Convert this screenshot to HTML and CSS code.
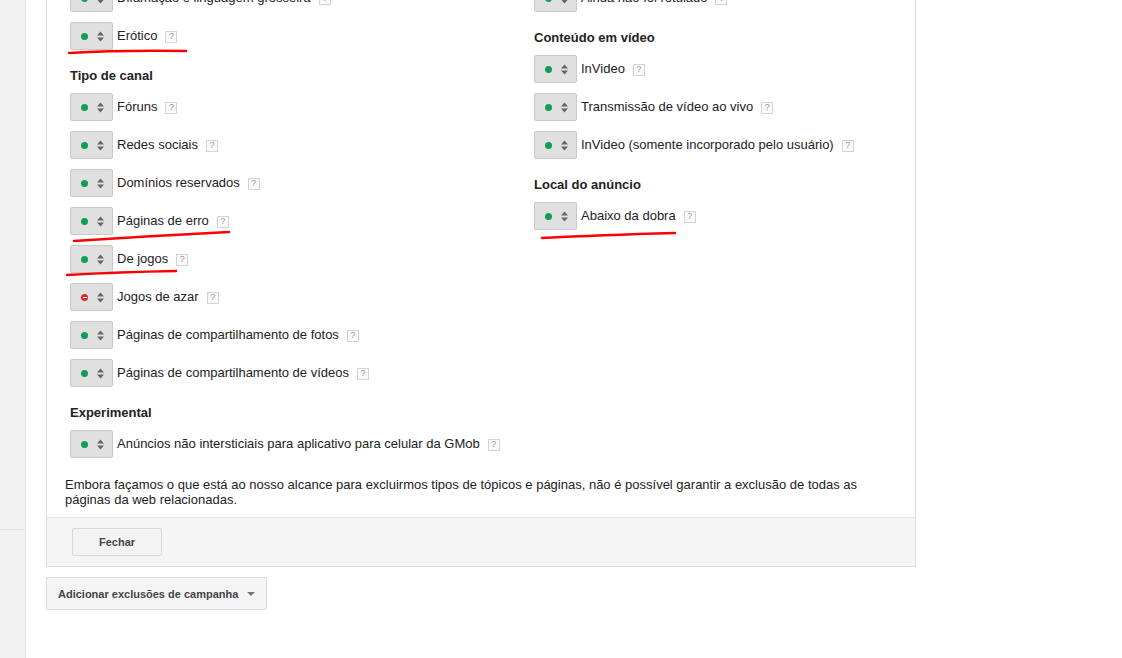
FILE: index.html
```html
<!DOCTYPE html>
<html lang="pt">
<head>
<meta charset="utf-8">
<title>Exclusões</title>
<link rel="stylesheet" href="styles.css">
</head>
<body>
<div class="page">
  <aside class="sidebar">
    <div class="side-top"></div>
    <div class="side-bottom"></div>
  </aside>
  <main class="main">
    <section class="panel">
      <div class="panel-body">
        <div class="columns">
          <div class="col">
            <div class="row"><span class="toggle"><i class="dot"></i><svg class="arr" viewBox="0 0 7 11"><path d="M0 4.5L3.5 0.5L7 4.5Z M0 6.5L3.5 10.5L7 6.5Z"/></svg></span><span class="label">Difamação e linguagem grosseira</span><span class="help">?</span></div>
            <div class="row"><span class="toggle"><i class="dot"></i><svg class="arr" viewBox="0 0 7 11"><path d="M0 4.5L3.5 0.5L7 4.5Z M0 6.5L3.5 10.5L7 6.5Z"/></svg></span><span class="label">Erótico</span><span class="help">?</span></div>
            <h3 class="heading">Tipo de canal</h3>
            <div class="row"><span class="toggle"><i class="dot"></i><svg class="arr" viewBox="0 0 7 11"><path d="M0 4.5L3.5 0.5L7 4.5Z M0 6.5L3.5 10.5L7 6.5Z"/></svg></span><span class="label">Fóruns</span><span class="help">?</span></div>
            <div class="row"><span class="toggle"><i class="dot"></i><svg class="arr" viewBox="0 0 7 11"><path d="M0 4.5L3.5 0.5L7 4.5Z M0 6.5L3.5 10.5L7 6.5Z"/></svg></span><span class="label">Redes sociais</span><span class="help">?</span></div>
            <div class="row"><span class="toggle"><i class="dot"></i><svg class="arr" viewBox="0 0 7 11"><path d="M0 4.5L3.5 0.5L7 4.5Z M0 6.5L3.5 10.5L7 6.5Z"/></svg></span><span class="label">Domínios reservados</span><span class="help">?</span></div>
            <div class="row"><span class="toggle"><i class="dot"></i><svg class="arr" viewBox="0 0 7 11"><path d="M0 4.5L3.5 0.5L7 4.5Z M0 6.5L3.5 10.5L7 6.5Z"/></svg></span><span class="label">Páginas de erro</span><span class="help">?</span></div>
            <div class="row"><span class="toggle"><i class="dot"></i><svg class="arr" viewBox="0 0 7 11"><path d="M0 4.5L3.5 0.5L7 4.5Z M0 6.5L3.5 10.5L7 6.5Z"/></svg></span><span class="label">De jogos</span><span class="help">?</span></div>
            <div class="row"><span class="toggle"><i class="dot dot-red"></i><svg class="arr" viewBox="0 0 7 11"><path d="M0 4.5L3.5 0.5L7 4.5Z M0 6.5L3.5 10.5L7 6.5Z"/></svg></span><span class="label">Jogos de azar</span><span class="help">?</span></div>
            <div class="row"><span class="toggle"><i class="dot"></i><svg class="arr" viewBox="0 0 7 11"><path d="M0 4.5L3.5 0.5L7 4.5Z M0 6.5L3.5 10.5L7 6.5Z"/></svg></span><span class="label">Páginas de compartilhamento de fotos</span><span class="help">?</span></div>
            <div class="row"><span class="toggle"><i class="dot"></i><svg class="arr" viewBox="0 0 7 11"><path d="M0 4.5L3.5 0.5L7 4.5Z M0 6.5L3.5 10.5L7 6.5Z"/></svg></span><span class="label">Páginas de compartilhamento de vídeos</span><span class="help">?</span></div>
            <h3 class="heading">Experimental</h3>
            <div class="row"><span class="toggle"><i class="dot"></i><svg class="arr" viewBox="0 0 7 11"><path d="M0 4.5L3.5 0.5L7 4.5Z M0 6.5L3.5 10.5L7 6.5Z"/></svg></span><span class="label">Anúncios não intersticiais para aplicativo para celular da GMob</span><span class="help">?</span></div>
          </div>
          <div class="col">
            <div class="row"><span class="toggle"><i class="dot"></i><svg class="arr" viewBox="0 0 7 11"><path d="M0 4.5L3.5 0.5L7 4.5Z M0 6.5L3.5 10.5L7 6.5Z"/></svg></span><span class="label">Ainda não foi rotulado</span><span class="help">?</span></div>
            <h3 class="heading">Conteúdo em vídeo</h3>
            <div class="row"><span class="toggle"><i class="dot"></i><svg class="arr" viewBox="0 0 7 11"><path d="M0 4.5L3.5 0.5L7 4.5Z M0 6.5L3.5 10.5L7 6.5Z"/></svg></span><span class="label">InVideo</span><span class="help">?</span></div>
            <div class="row"><span class="toggle"><i class="dot"></i><svg class="arr" viewBox="0 0 7 11"><path d="M0 4.5L3.5 0.5L7 4.5Z M0 6.5L3.5 10.5L7 6.5Z"/></svg></span><span class="label">Transmissão de vídeo ao vivo</span><span class="help">?</span></div>
            <div class="row"><span class="toggle"><i class="dot"></i><svg class="arr" viewBox="0 0 7 11"><path d="M0 4.5L3.5 0.5L7 4.5Z M0 6.5L3.5 10.5L7 6.5Z"/></svg></span><span class="label">InVideo (somente incorporado pelo usuário)</span><span class="help">?</span></div>
            <h3 class="heading">Local do anúncio</h3>
            <div class="row"><span class="toggle"><i class="dot"></i><svg class="arr" viewBox="0 0 7 11"><path d="M0 4.5L3.5 0.5L7 4.5Z M0 6.5L3.5 10.5L7 6.5Z"/></svg></span><span class="label">Abaixo da dobra</span><span class="help">?</span></div>
          </div>
        </div>
        <p class="note">Embora façamos o que está ao nosso alcance para excluirmos tipos de tópicos e páginas, não é possível garantir a exclusão de todas as páginas da web relacionadas.</p>
      </div>
      <div class="panel-footer">
        <button class="btn btn-close">Fechar</button>
      </div>
    </section>
    <button class="btn btn-add">Adicionar exclusões de campanha <span class="caret"></span></button>
  </main>
</div>
<svg class="marks" width="1122" height="658" viewBox="0 0 1122 658">
  <path d="M69 53 Q 120 50 186 51" />
  <path d="M74 241 Q 150 236 229 232" />
  <path d="M67 275 Q 120 272 176 271" />
  <path d="M542 238 Q 600 235 675 233" />
</svg>
</body>
</html>
```

FILE: styles.css
```css
* { box-sizing: border-box; }

html, body {
  margin: 0;
  padding: 0;
  background: #fff;
  height: 100%;
  overflow: hidden;
}

body {
  font-family: "Liberation Sans", Arial, sans-serif;
  font-size: 13px;
  color: #222;
  position: relative;
}

.page {
  display: flex;
  min-height: 658px;
}

.sidebar {
  width: 26px;
  flex: none;
  background: #f1f1f1;
  border-right: 1px solid #e2e2e2;
  display: flex;
  flex-direction: column;
}

.side-top {
  height: 530px;
  border-bottom: 1px solid #e2e2e2;
}

.side-bottom {
  flex: 1;
}

.main {
  padding-left: 20px;
  flex: 1;
}

.panel {
  width: 870px;
  border: 1px solid #dcdcdc;
  margin-top: -37px;
  background: #fff;
}

.panel-body {
  padding: 20px 18px 10px 18px;
}

.columns {
  display: grid;
  grid-template-columns: 464px 1fr;
  padding-left: 5px;
}

.row {
  display: flex;
  align-items: center;
  height: 28px;
  margin-bottom: 10px;
  white-space: nowrap;
}

.toggle {
  display: flex;
  align-items: center;
  width: 43px;
  height: 28px;
  padding-left: 10px;
  background: #e0e0e0;
  border: 1px solid #c9c9c9;
  border-radius: 2px;
  flex: none;
}

.dot {
  display: block;
  width: 7px;
  height: 7px;
  border-radius: 50%;
  background: #0f9d58;
  position: relative;
}

.dot-red {
  background: #dd2c2c;
}

.dot-red::after {
  content: "";
  position: absolute;
  left: 1.5px;
  top: 3px;
  width: 4px;
  height: 1.3px;
  background: #fff;
}

.arr {
  width: 7px;
  height: 11px;
  margin-left: 9px;
  fill: #666;
}

.label {
  margin-left: 4px;
  line-height: 16px;
  color: #222;
}

.help {
  display: inline-flex;
  align-items: center;
  justify-content: center;
  width: 12px;
  height: 12px;
  margin-left: 8px;
  border: 1px solid #d3d3d3;
  background: #fafafa;
  color: #999;
  font-size: 9px;
  line-height: 1;
  margin-top: 1px;
}

.heading {
  margin: 0;
  padding: 7px 0 8px;
  font-size: 13px;
  line-height: 18px;
  font-weight: bold;
  color: #222;
}

.note {
  margin: 9px 0 0;
  line-height: 15px;
  color: #222;
  width: 832px;
}

.panel-footer {
  background: #f5f5f5;
  border-top: 1px solid #e5e5e5;
  padding: 10px 25px;
}

.btn {
  font-family: "Liberation Sans", Arial, sans-serif;
  font-size: 11px;
  font-weight: bold;
  color: #444;
  background: #f3f3f3;
  border: 1px solid #d9d9d9;
  border-radius: 2px;
  cursor: pointer;
}

.btn-close {
  display: block;
  width: 90px;
  height: 28px;
  padding: 0;
}

.btn-add {
  display: flex;
  align-items: center;
  margin-top: 10px;
  width: 221px;
  height: 33px;
  padding: 0 0 0 11px;
  background: #f5f5f5;
}

.caret {
  display: inline-block;
  margin-left: 9px;
  width: 0;
  height: 0;
  border-left: 4px solid transparent;
  border-right: 4px solid transparent;
  border-top: 4px solid #777;
}

.marks {
  position: absolute;
  top: 0;
  left: 0;
  pointer-events: none;
}

.marks path {
  fill: none;
  stroke: #f00;
  stroke-width: 2.4;
  stroke-linecap: round;
}
```
